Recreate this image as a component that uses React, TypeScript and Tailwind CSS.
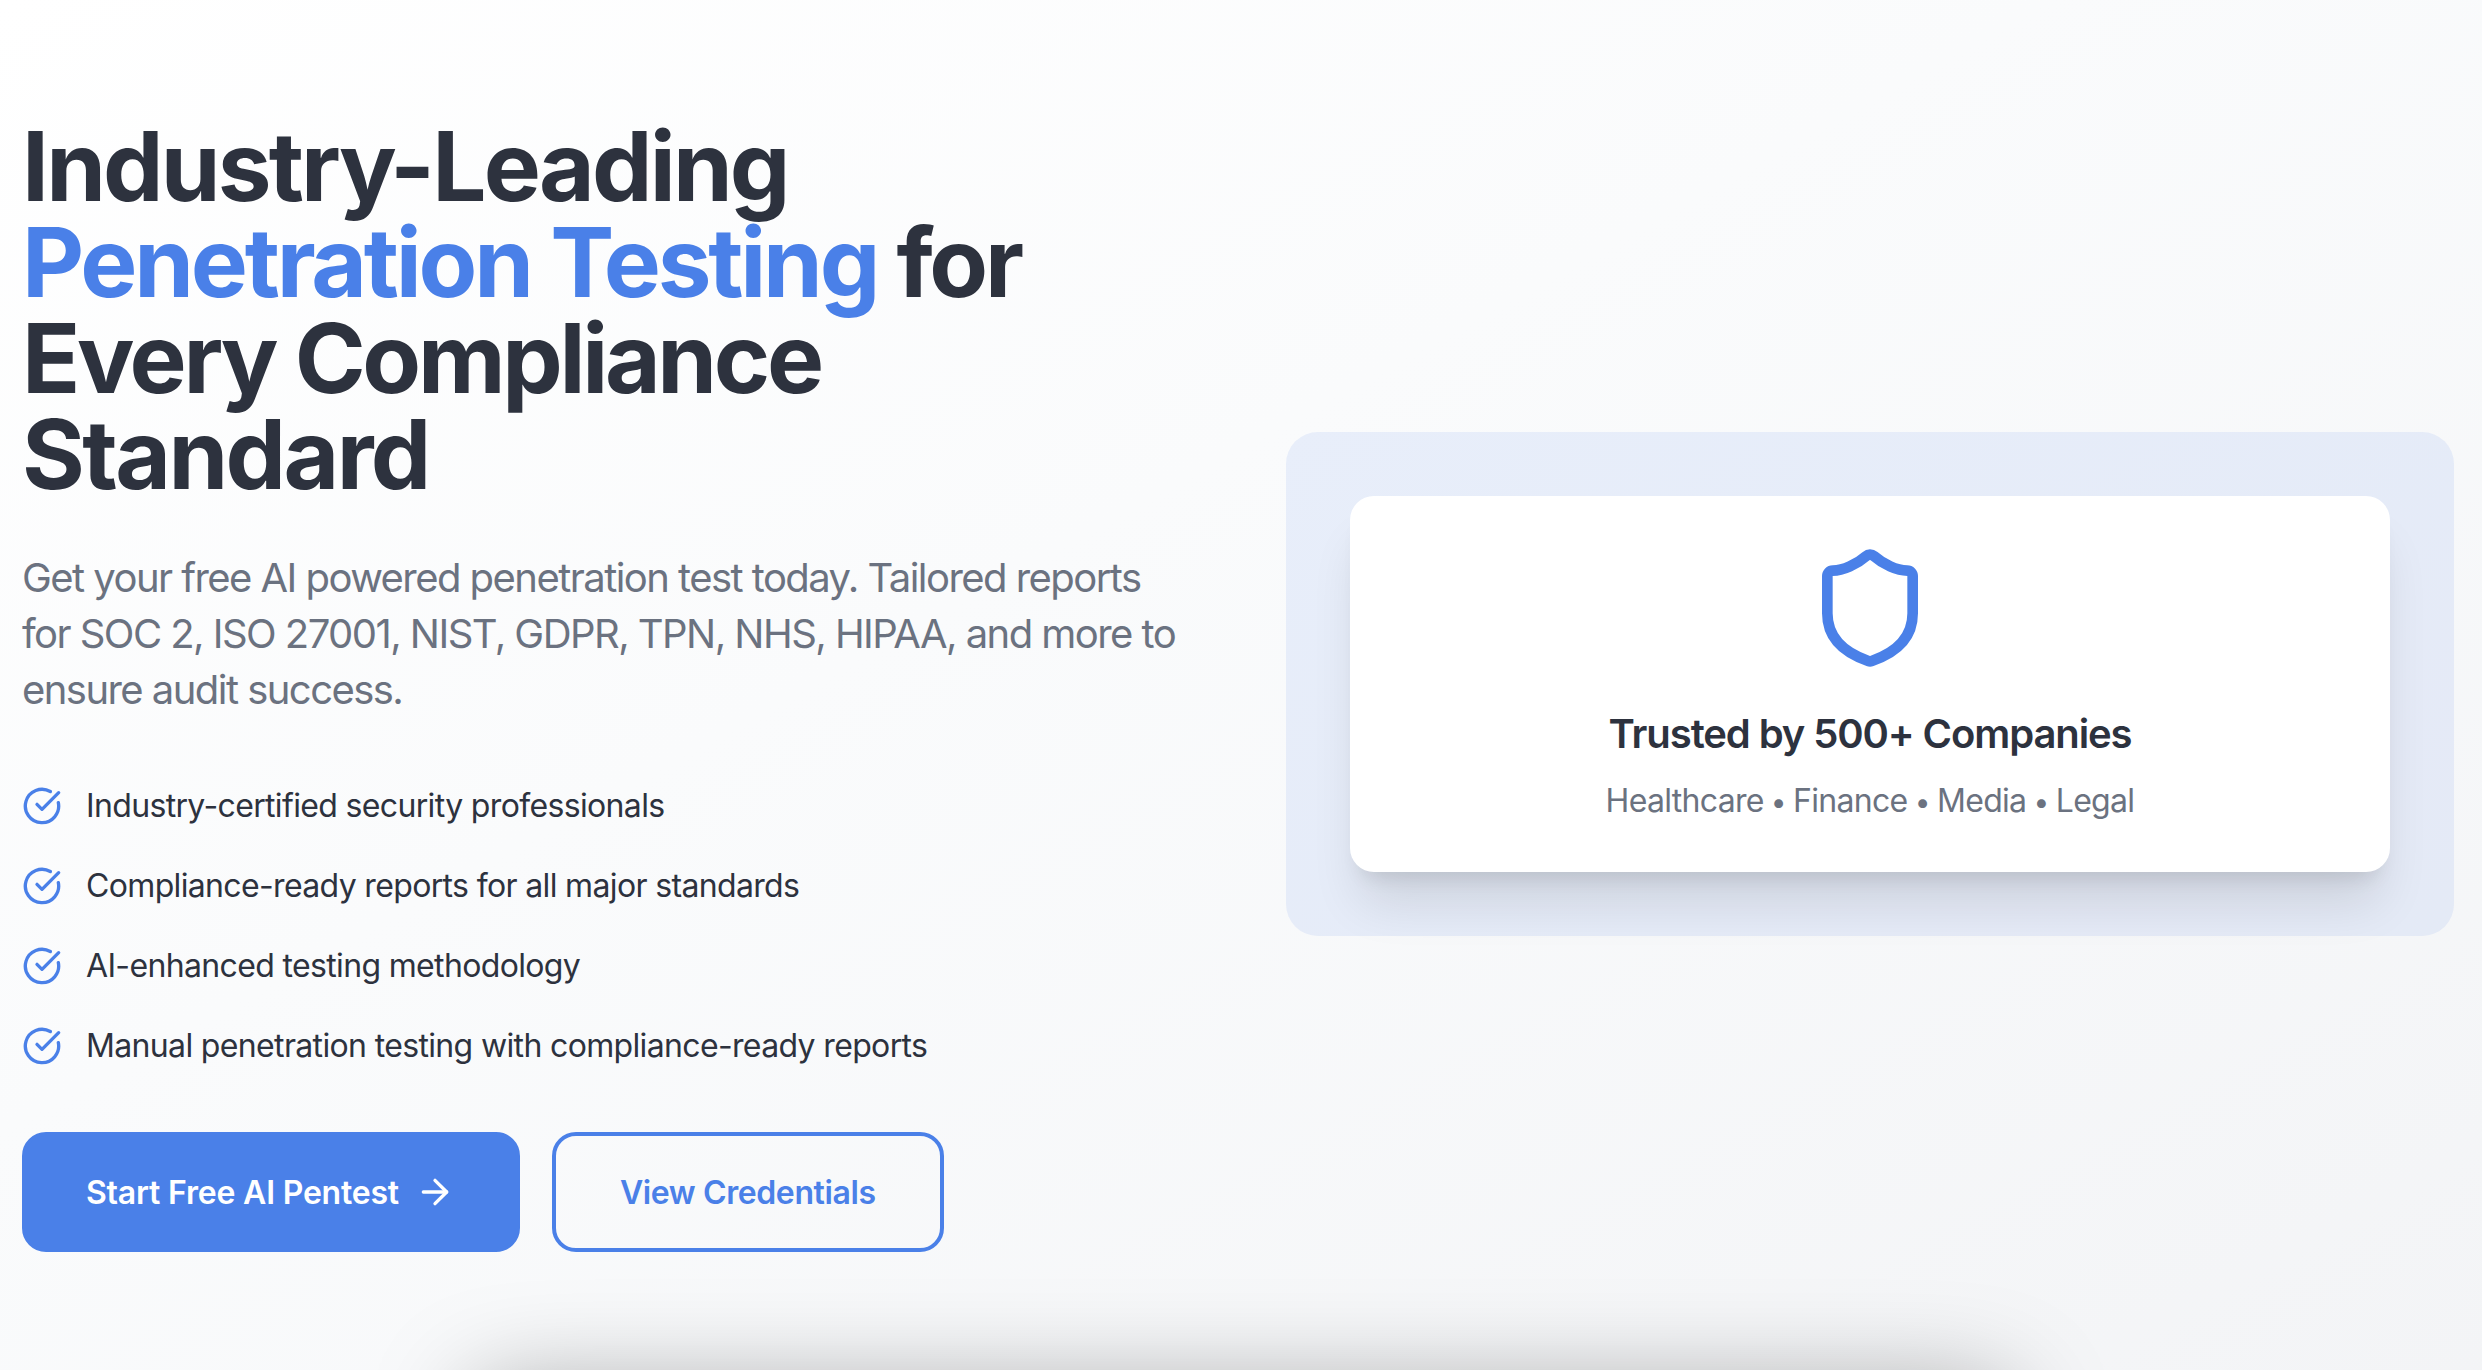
import React from 'react';
import { ArrowRight, CircleCheckBig, Shield } from 'lucide-react';

const FEATURES = [
  'Industry-certified security professionals',
  'Compliance-ready reports for all major standards',
  'AI-enhanced testing methodology',
  'Manual penetration testing with compliance-ready reports',
];

const Dot = () => <span className="text-[28px]"> • </span>;

const App: React.FC = () => {
  return (
    <div className="h-[1370px] overflow-hidden bg-linear-to-br from-white via-gray-50 to-gray-100 font-['Inter',sans-serif] antialiased">
      <section className="grid grid-cols-2 items-center gap-24 pl-[22px] pr-7 pt-[116px]">
        <div>
          <h1 className="mt-[2px] text-[96px] font-bold leading-[96px] tracking-[-2.8px] text-[#2d323e]">
            Industry-Leading{' '}
            <span className="tracking-[-3.2px] text-[#4a80e8]">Penetration Testing</span>
            <span className="tracking-[-3.3px]"> for Every Compliance</span>
            {' '}
            <span className="tracking-[-2.6px]">Standard</span>
          </h1>
          <p className="mt-12 text-[40px] leading-[56px] tracking-[-1.55px] text-[#6b7280]">
            Get your free AI powered penetration test today. Tailored reports for SOC 2, ISO 27001, NIST, GDPR, TPN, NHS, HIPAA, and more to ensure audit success.
          </p>
          <ul className="mt-16 flex flex-col gap-8">
            {FEATURES.map((item) => (
              <li key={item} className="flex items-center gap-6 text-[32px] leading-[48px] tracking-[-0.65px] text-[#2d323e]">
                <CircleCheckBig size={40} className="shrink-0 text-[#4a80e8]" />
                {item}
              </li>
            ))}
          </ul>
          <div className="mt-[62px] flex gap-8">
            <button className="flex items-center gap-4 rounded-3xl border-4 border-[#4a80e8] bg-[#4a80e8] py-8 pl-[60px] pr-[61px] text-[32px] font-semibold leading-[48px] tracking-[-0.2px] text-white">
              <span className="translate-y-px">Start Free AI Pentest</span>
              <ArrowRight size={40} />
            </button>
            <button className="rounded-3xl border-4 border-[#4a80e8] px-16 py-8 text-[32px] font-semibold leading-[48px] tracking-[-0.4px] text-[#4a80e8]">
              <span className="inline-block translate-y-px">View Credentials</span>
            </button>
          </div>
        </div>

        <div className="rounded-[32px] bg-[#4a80e8]/10 p-16">
          <div className="flex flex-col items-center rounded-3xl bg-white px-12 pb-[46px] pt-12 shadow-[0_40px_50px_-10px_rgba(0,0,0,0.11),0_16px_20px_-12px_rgba(0,0,0,0.11)]">
            <Shield size={128} className="text-[#4a80e8]" />
            <h3 className="mt-[34px] text-[40px] font-semibold leading-[56px] tracking-[-1.1px] text-[#2d323e]">Trusted by 500+ Companies</h3>
            <p className="mt-[15px] text-[32px] leading-[48px] tracking-[-0.7px] text-[#6b7280]">
              Healthcare<Dot />Finance<Dot />Media<Dot />Legal
            </p>
          </div>
        </div>
      </section>

      {/* next section sits below the fold, only its shadow shows */}
      <div className="mx-auto mt-[138px] h-[600px] w-[1536px] rounded-3xl shadow-[0_0_100px_rgba(0,0,0,0.35)]" />
    </div>
  );
};

export default App;
